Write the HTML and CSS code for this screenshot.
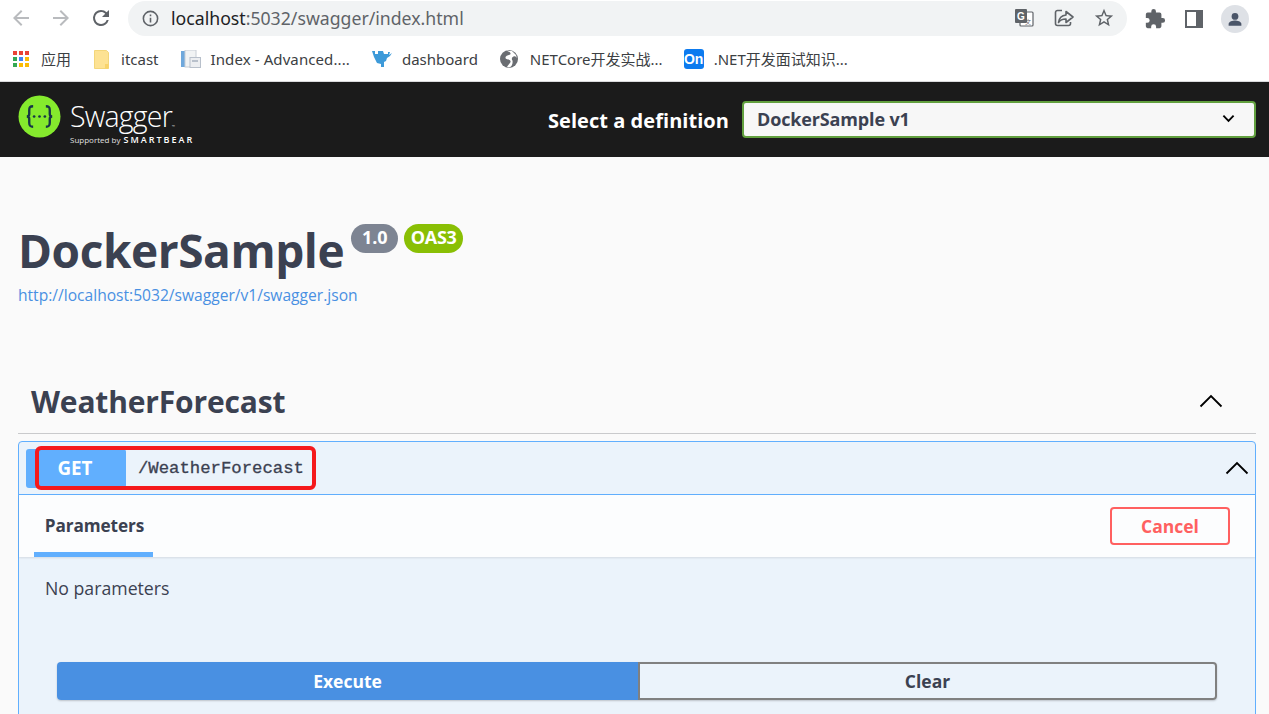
FILE: index.html
```html
<!DOCTYPE html>
<html lang="zh">
<head>
<meta charset="utf-8">
<title>Swagger UI</title>
<link rel="stylesheet" href="styles.css">
</head>
<body>
<header class="chrome">
  <div class="toolbar">
    <div class="nav">
      <svg class="ic24 dim" viewBox="0 0 24 24"><path d="M20 11H7.8l5.6-5.6L12 4l-8 8 8 8 1.4-1.4L7.8 13H20z"/></svg>
      <svg class="ic24 dim" viewBox="0 0 24 24"><path d="M12 4l-1.4 1.4 5.6 5.6H4v2h12.2l-5.6 5.6L12 20l8-8z"/></svg>
      <svg class="ic24" viewBox="0 0 24 24"><path d="M17.65 6.35A7.96 7.96 0 0 0 12 4a8 8 0 1 0 7.73 10h-2.08A6 6 0 1 1 12 6c1.66 0 3.14.69 4.22 1.78L13 11h7V4z"/></svg>
    </div>
    <div class="omnibox">
      <svg class="info" viewBox="0 0 24 24"><path d="M11 7h2v2h-2zm0 4h2v6h-2zm1-9a10 10 0 1 0 0 20 10 10 0 0 0 0-20zm0 18a8 8 0 1 1 0-16 8 8 0 0 1 0 16z"/></svg>
      <span class="url"><span class="host">localhost</span>:5032/swagger/index.html</span>
      <div class="omni-actions">
        <svg class="ic22" viewBox="0 0 22 22"><rect x="7" y="5" width="13" height="14" rx="1" fill="#fff" stroke="#5f6368" stroke-width="1.2"/><rect x="2" y="2" width="12" height="14" rx="1" fill="#5f6368"/><text x="8" y="13" class="g-glyph">G</text><text x="15" y="17" class="t-glyph">文</text></svg>
        <svg class="ic22" viewBox="0 0 22 22"><path d="M13 8V4.500L20 10l-7 5.500V12c-3.500 0-6 1-7.500 3.500C6 11.500 8.500 8.500 13 8z" fill="none" stroke="#5f6368" stroke-width="1.600" stroke-linejoin="round"/><path d="M9 3.500H4.500a2 2 0 0 0-2 2v11a2 2 0 0 0 2 2h11a2 2 0 0 0 2-2V15" fill="none" stroke="#5f6368" stroke-width="1.600"/></svg>
        <svg class="ic22" viewBox="0 0 24 24"><path d="M22 9.240l-7.190-.62L12 2 9.190 8.630 2 9.240l5.460 4.730L5.820 21 12 17.270 18.180 21l-1.630-7.030L22 9.240zM12 15.400l-3.760 2.270 1-4.280-3.320-2.880 4.380-.38L12 6.100l1.710 4.040 4.380.38-3.320 2.880 1 4.280L12 15.400z"/></svg>
      </div>
    </div>
    <div class="profile-actions">
      <svg class="ic22" viewBox="0 0 24 24"><path d="M20.500 11H19V7a2 2 0 0 0-2-2h-4V3.500a2.500 2.500 0 0 0-5 0V5H4a2 2 0 0 0-2 2v3.800h1.500a2.700 2.700 0 0 1 0 5.400H2V20a2 2 0 0 0 2 2h3.800v-1.500a2.700 2.700 0 0 1 5.400 0V22H17a2 2 0 0 0 2-2v-4h1.500a2.500 2.500 0 0 0 0-5z"/></svg>
      <svg class="ic22 panel" viewBox="0 0 18 18"><path fill-rule="evenodd" d="M0 0h18v18H0zM2 2v14h9V2z"/></svg>
      <span class="avatar"><svg viewBox="0 0 24 24"><circle cx="12" cy="8.500" r="4.500"/><path d="M3.500 21v-2.500c0-3 5.500-4.500 8.500-4.500s8.500 1.500 8.500 4.500V21z"/></svg></span>
    </div>
  </div>
  <nav class="bookmarks">
    <a class="bm bm-apps">
      <svg class="bm-ic" viewBox="0 0 16 16"><rect x="0" y="0" width="4" height="4" fill="#ea4335"/><rect x="6" y="0" width="4" height="4" fill="#ea4335"/><rect x="12" y="0" width="4" height="4" fill="#ea4335"/><rect x="0" y="6" width="4" height="4" fill="#34a853"/><rect x="6" y="6" width="4" height="4" fill="#4285f4"/><rect x="12" y="6" width="4" height="4" fill="#fbbc04"/><rect x="0" y="12" width="4" height="4" fill="#34a853"/><rect x="6" y="12" width="4" height="4" fill="#fbbc04"/><rect x="12" y="12" width="4" height="4" fill="#fbbc04"/></svg>
      <span>应用</span>
    </a>
    <a class="bm bm-itcast">
      <svg class="bm-ic-folder" viewBox="0 0 16 19"><path d="M1.500.5h12l2 2v16h-14z" fill="#fde293" stroke="#f3d67a"/><path d="M12 14h3.500v4.500H12z" fill="#f8d36a"/></svg>
      <span>itcast</span>
    </a>
    <a class="bm bm-index">
      <svg class="bm-ic-wide" viewBox="0 0 20 18"><rect x="0" y="1" width="4" height="16" fill="#6fa8dc"/><rect x="4" y="0" width="11" height="17" fill="#f1f3f4" stroke="#c8ced6"/><rect x="9" y="7.500" width="10.500" height="10" fill="#eceef1" stroke="#b8c0cb"/><rect x="11" y="10" width="6" height="2" fill="#b8c0cb"/></svg>
      <span class="index-text">Index - Advanced....</span>
    </a>
    <a class="bm bm-dash">
      <svg class="bm-ic-wide" viewBox="0 0 20 18"><path d="M0 1h3v3h3V1h5l1 3h4V2h2l-1 3 3-2-2 3-3 2-1 3-2 1v5H9v-3L5 13 2 7z" fill="#3d9ad9"/></svg>
      <span>dashboard</span>
    </a>
    <a class="bm bm-net">
      <svg class="bm-ic-globe" viewBox="0 0 18 18"><circle cx="9" cy="9" r="9" fill="#6a6d72"/><path d="M6 .5c3 1 5 2 4.500 3.500S6 5 5.500 7.500 10 9 10.500 11s-2 3-3.500 6l2 .5c3-1 4-4 3.500-7-1-1-1-3 1-4s3 1 3.500 2l-1-3.500L12 1z" fill="#fff"/></svg>
      <span>NETCore开发实战...</span>
    </a>
    <a class="bm bm-on">
      <span class="on-fav">On</span>
      <span>.NET开发面试知识...</span>
    </a>
  </nav>
</header>

<div class="topbar">
  <div class="logo">
    <svg class="logo-mark" viewBox="0 0 44 44"><circle cx="22" cy="22" r="21.500" fill="#85ea2d"/><path d="M15.500 11.500c-3.500 0-4 1.500-4 4v4c0 1.500-1 2.500-2.500 2.500 1.500 0 2.500 1 2.500 2.500v4c0 2.500.5 4 4 4M28.500 11.500c3.500 0 4 1.500 4 4v4c0 1.500 1 2.500 2.500 2.500-1.500 0-2.500 1-2.500 2.500v4c0 2.500-.5 4-4 4" fill="none" stroke="#173647" stroke-width="2.400"/><circle cx="16.500" cy="22" r="1.400" fill="#173647"/><circle cx="22" cy="22" r="1.400" fill="#173647"/><circle cx="27.500" cy="22" r="1.400" fill="#173647"/></svg>
    <div class="logo-words">
      <span class="logo-name">Swagger<span class="tm">™</span></span>
      <span class="logo-sub">Supported by <b>SMARTBEAR</b></span>
    </div>
  </div>
  <form class="definition">
    <span class="def-label">Select a definition</span>
    <div class="def-select">
      <span>DockerSample v1</span>
      <svg class="def-caret" viewBox="0 0 14 9"><path d="M1.500 1.500L7 7l5.500-5.500" fill="none" stroke="#000" stroke-width="2"/></svg>
    </div>
  </form>
</div>

<main class="page">
  <section class="info-block">
    <div class="title-row">
      <h1>DockerSample</h1>
      <span class="badge badge-ver">1.0</span>
      <span class="badge badge-oas">OAS3</span>
    </div>
    <a class="spec-link">http://localhost:5032/swagger/v1/swagger.json</a>
  </section>

  <section class="tag-section">
    <div class="tag-head">
      <h2>WeatherForecast</h2>
      <svg class="chev" viewBox="0 0 24 14"><path d="M1.500 12.500L12 2l10.500 10.500" fill="none" stroke="#000" stroke-width="1.800"/></svg>
    </div>
    <article class="opblock">
      <div class="op-summary">
        <span class="op-method">GET</span>
        <span class="op-path">/WeatherForecast</span>
        <svg class="chev chev-op" viewBox="0 0 24 14"><path d="M1.500 12.500L12 2l10.500 10.500" fill="none" stroke="#000" stroke-width="1.800"/></svg>
        <span class="annotation"></span>
      </div>
      <div class="op-tabs">
        <span class="tab">Parameters</span>
        <button class="btn-cancel" type="button">Cancel</button>
      </div>
      <div class="op-body">
        <p class="no-params">No parameters</p>
        <div class="exec-row">
          <button class="btn-exec" type="button">Execute</button>
          <button class="btn-clear" type="button">Clear</button>
        </div>
      </div>
    </article>
  </section>
</main>
</body>
</html>
```
FILE: styles.css
```css
* { box-sizing: border-box; }
html, body { margin: 0; height: 714px; overflow: hidden; }
body { background: #fafafa; font-family: "Open Sans", "Noto Sans", "Noto Sans CJK SC", sans-serif; color: #3b4151; }
svg { display: block; flex: none; }

.chrome { background: #fff; border-bottom: 1px solid #d9dadc; height: 82px; }
.toolbar { height: 37px; display: flex; align-items: center; }
.nav { display: flex; align-items: center; gap: 16px; padding: 0 0 1px 9px; width: 128px; }
.ic24 { width: 24px; height: 24px; fill: #5f6368; }
.ic24.dim { fill: #b9bbbe; }
.omnibox { width: 999px; height: 35px; border-radius: 18px; background: #f1f3f4; display: flex; align-items: center; padding: 0 0 1px 13px; }
.info { width: 19px; height: 19px; fill: #5f6368; }
.url { margin-left: 11px; font: 17.680px "Noto Sans", sans-serif; color: #5f6368; }
.host { color: #202124; }
.omni-actions { margin-left: auto; display: flex; gap: 18px; padding-right: 12px; align-items: center; }
.ic22 { width: 22px; height: 22px; fill: #5f6368; }
.g-glyph { font: bold 10px "Liberation Sans", sans-serif; fill: #fff; text-anchor: middle; }
.t-glyph { font: 6px "Noto Sans CJK SC", sans-serif; fill: #5f6368; text-anchor: middle; }
.profile-actions { display: flex; align-items: center; padding-left: 17px; gap: 18px; }
.ic22.panel { width: 18px; height: 18px; margin-left: 1px; }
.avatar { width: 28px; height: 28px; border-radius: 50%; background: #dee1e6; display: flex; align-items: center; justify-content: center; }
.avatar svg { width: 18px; height: 18px; fill: #4a5568; }

.bookmarks { height: 44px; display: flex; align-items: center; }
.bm { display: flex; align-items: center; font: 15px/20px "Noto Sans", "Noto Sans CJK SC", sans-serif; color: #3c4043; white-space: nowrap; }
.bm-ic { width: 16px; height: 16px; }
.bm-apps { margin-left: 13px; gap: 12px; }
.bm-itcast { margin-left: 22px; gap: 12px; }
.bm-index { margin-left: 22px; gap: 10px; }
.bm-dash { margin-left: 22px; gap: 10px; }
.bm-net { margin-left: 22px; gap: 12px; }
.bm-on { margin-left: 21px; gap: 10px; }
.bm-ic-folder { width: 16px; height: 19px; }
.bm-ic-wide { width: 20px; height: 18px; }
.bm-ic-globe { width: 18px; height: 18px; }
.index-text { letter-spacing: .1px; }
.on-fav { width: 20px; height: 20px; border-radius: 3px; background: #0d7bef; color: #fff; font: bold 14px "Liberation Sans", sans-serif; display: flex; align-items: center; justify-content: center; }

.topbar { height: 75px; background: #1b1b1b; display: flex; align-items: center; padding: 0 13px 0 18px; }
.logo { display: flex; align-items: center; gap: 9px; margin-top: -6px; }
.logo-mark { width: 43px; height: 43px; }
.logo-words { display: flex; flex-direction: column; color: #fff; margin-top: 14px; }
.logo-name { font: 300 28.500px/30px "Open Sans", sans-serif; letter-spacing: -.8px; margin-bottom: -8px; }
.tm { font-size: 4px; vertical-align: -1px; }
.logo-sub { font: 8px/12px "Open Sans", sans-serif; color: #e0e0e0; white-space: nowrap; }
.logo-sub b { font-weight: 600; font-size: 9px; letter-spacing: 2px; color: #fff; margin-left: 1px; }
.definition { margin-left: auto; display: flex; align-items: center; }
.def-label { font: bold 20px "Open Sans", sans-serif; color: #fff; margin-right: 13px; letter-spacing: .05px; padding-top: 2px; }
.def-select { width: 514px; height: 37px; border: 2px solid #62a03f; border-radius: 4px; background: #f7f7f7; display: flex; align-items: center; justify-content: space-between; padding: 0 19px 2px 13px; font: bold 18px "Open Sans", sans-serif; color: #3b4151; letter-spacing: -.15px; }
.def-caret { width: 13px; height: 9px; }

.page { padding: 0 13px 0 18px; }
.info-block { padding-top: 62px; height: 220px; }
.title-row { display: flex; align-items: flex-start; height: 64px; }
h1 { margin: 0; font: bold 46px/62px "Open Sans", sans-serif; color: #3b4151; letter-spacing: -.43px; }
.badge { margin-top: 5px; height: 29px; border-radius: 15px; color: #fff; font: bold 18px/27px "Open Sans", sans-serif; text-align: center; }
.badge-ver { margin-left: 7px; width: 47px; background: #7d8492; }
.badge-oas { margin-left: 6px; width: 59px; background: #89bf04; letter-spacing: -.3px; }
.spec-link { display: block; font: 15.600px/24px "Open Sans", sans-serif; color: #4990e2; }

.tag-head { height: 57px; border-bottom: 1px solid #c9cacc; display: flex; align-items: center; justify-content: space-between; padding: 0 33px 8px 13px; }
h2 { margin: 0; font: bold 30px "Open Sans", sans-serif; color: #3b4151; letter-spacing: -.17px; }
.chev { width: 24px; height: 14px; }
.opblock { position: relative; margin-top: 7px; border: 1px solid #61affe; border-radius: 4px; background: #ebf3fb; height: 320px; }
.op-summary { position: relative; height: 53px; border-bottom: 1px solid #61affe; display: flex; align-items: center; padding: 0 6px 0 7px; }
.op-method { width: 100px; height: 39px; padding-right: 2px; border-radius: 3px; background: #61affe; color: #fff; font: bold 18.800px/39px "Open Sans", sans-serif; text-align: center; }
.op-path { margin-left: 12px; font: 17.300px "Liberation Mono", monospace; color: #3b4151; -webkit-text-stroke: .3px #3b4151; }
.chev-op { margin-left: auto; }
.annotation { position: absolute; left: 16px; top: 4px; width: 281px; height: 44px; border: 4px solid #f5191c; border-radius: 6px; }
.op-tabs { height: 62px; background: #fcfdfe; box-shadow: 0 1px 2px rgba(0,0,0,.1); display: flex; align-items: flex-end; justify-content: space-between; padding: 0 25px 0 15px; position: relative; }
.tab { width: 119px; height: 62px; padding-left: 2px; border-bottom: 5px solid #61affe; font: bold 17.200px/62px "Open Sans", sans-serif; text-align: center; letter-spacing: -.1px; }
.btn-cancel { align-self: flex-start; margin-top: 12px; width: 120px; height: 38px; background: transparent; border: 2px solid #ff6060; border-radius: 4px; color: #ff6060; font: bold 17.500px "Open Sans", sans-serif; padding: 0; }
.op-body { padding: 0 38px; }
.no-params { margin: 0 -12px; padding-top: 19px; font: 17.700px/24px "Open Sans", sans-serif; color: #3b4151; }
.exec-row { display: flex; margin-top: 62px; height: 38px; width: 1160px; box-shadow: 0 1px 2px rgba(0,0,0,.2); border-radius: 4px; }
.btn-exec { width: 581px; background: #4990e2; border: 0; border-radius: 4px 0 0 4px; color: #fff; font: bold 17.500px "Open Sans", sans-serif; padding: 0; }
.btn-clear { flex: 1; background: transparent; border: 2px solid #808080; border-radius: 0 4px 4px 0; color: #3b4151; font: bold 17.500px "Open Sans", sans-serif; padding: 0; }
```
